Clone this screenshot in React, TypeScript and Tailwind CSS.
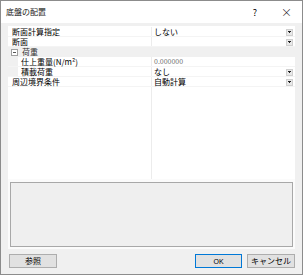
import React from 'react';

type Row = {
  label: string;
  value?: string;
  child?: boolean;
  category?: boolean;
  dropdown?: boolean;
  muted?: boolean;
};

const rows: Row[] = [
  { label: '断面計算指定', value: 'しない', dropdown: true },
  { label: '断面', value: '', dropdown: true },
  { label: '荷重', category: true },
  { label: '仕上重量(N/m²)', value: '0.000000', child: true, muted: true },
  { label: '積載荷重', value: 'なし', child: true, dropdown: true },
  { label: '周辺境界条件', value: '自動計算', dropdown: true },
];

function DropButton() {
  return (
    <div className="ml-auto mr-[2px] mt-[2px] flex h-[7px] w-[7px] items-center justify-center border border-[#d0d0d0] bg-[#e8e8e8]">
      <svg width="3" height="3" viewBox="0 0 3 3">
        <rect x="0" y="0" width="3" height="1" fill="#222" />
        <rect x="1" y="1" width="1" height="1" fill="#222" />
      </svg>
    </div>
  );
}

function GridRow({ row }: { row: Row }) {
  if (row.category) {
    return (
      <div className="flex h-[10px] items-center bg-[#f0f0f0]">
        <div className="ml-[3px] flex h-[7px] w-[7px] items-center justify-center border border-[#a0a0a0] bg-white">
          <div className="h-px w-[3px] bg-[#555]" />
        </div>
        <span className="ml-[4px] text-[#333]">{row.label}</span>
      </div>
    );
  }
  return (
    <div className="flex h-[10px] border-b border-[#f4f4f4]">
      <div className="flex w-[144px] items-center border-r border-[#ececec]">
        {row.child && <div className="h-full w-[10px] bg-[#f0f0f0]" />}
        <span className={row.child ? 'ml-[3px]' : 'ml-[4px]'}>{row.label}</span>
      </div>
      <div className="flex flex-1 items-center">
        <span className={`ml-[2px] ${row.muted ? 'text-[#6d6d6d] text-[7px]' : ''}`}>{row.value}</span>
        {row.dropdown && <DropButton />}
      </div>
    </div>
  );
}

export default function App() {
  return (
    <div className="flex h-[275px] w-[303px] flex-col border border-[#8c8c8c] bg-[#f0f0f0] font-['Noto_Sans_CJK_JP','Liberation_Sans',sans-serif] text-[8px] leading-none text-black">
      <div className="flex h-[22px] items-center bg-white pl-[5px]">
        <span className="text-[#222]">底盤の配置</span>
        <span className="ml-auto mr-[24px] text-[9px]">?</span>
        <span className="mr-[10px] text-[11px] font-light">×</span>
      </div>
      <div className="flex flex-1 flex-col px-[7px] pt-[3px]">
        <div className="flex flex-col bg-[#fbfbfb] pb-[2px]">
          <div className="flex h-[153px] flex-col bg-white pt-[1px]">
            {rows.map((r) => (
              <GridRow key={r.label} row={r} />
            ))}
            <div className="flex flex-1">
              <div className="w-[144px] border-r border-[#ececec]" />
            </div>
          </div>
          <div className="mx-[2px] mt-[3px] h-[65px] border border-[#a8a8a8] bg-[#efefef]" />
        </div>
        <div className="mt-[5px] flex items-center">
          <button className="ml-[1px] flex h-[14px] w-[48px] items-center justify-center border border-[#adadad] bg-[#e1e1e1]">
            参照
          </button>
          <button className="ml-auto flex h-[14px] w-[47px] items-center justify-center border border-[#0078d7] bg-[#e1e1e1] font-['Liberation_Sans',sans-serif] text-[7px]">
            OK
          </button>
          <button className="ml-[5px] flex h-[14px] w-[48px] items-center justify-center border border-[#adadad] bg-[#e1e1e1]">
            キャンセル
          </button>
        </div>
      </div>
    </div>
  );
}
